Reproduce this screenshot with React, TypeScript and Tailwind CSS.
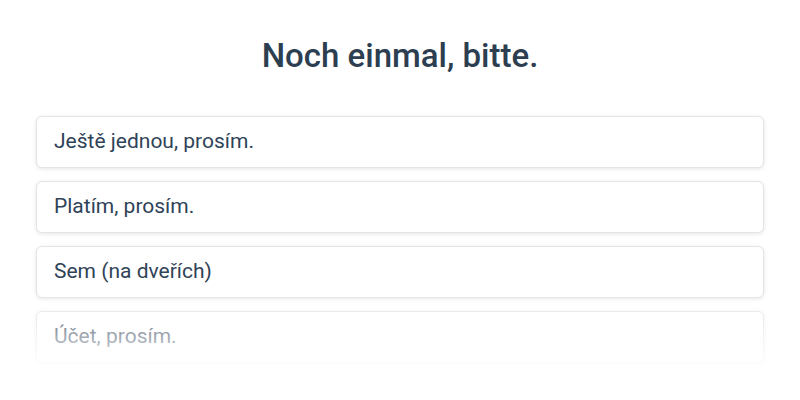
const phrases = ['Ještě jednou, prosím.', 'Platím, prosím.', 'Sem (na dveřích)', 'Účet, prosím.']

export default function App() {
  return (
    <div className="w-[800px] h-[400px] bg-white overflow-hidden font-['Roboto',sans-serif] text-[#2c3e50]">
      <h1 className="pt-[36px] text-center text-[33px] leading-[40px] font-medium">Noch einmal, bitte.</h1>
      <div className="relative mx-[36px] mt-[40px] flex flex-col gap-[13px] pb-[10px]">
        {phrases.map((p) => (
          <div
            key={p}
            className="h-[52px] flex items-center px-[17px] rounded-[6px] border border-[#e4e4e4] bg-white shadow-[0_1px_4px_rgba(0,0,0,0.10)] text-[21px] text-[#2f4358]"
          >
            {p}
          </div>
        ))}
        <div className="pointer-events-none absolute left-[-6px] right-[-6px] bottom-0 h-[80px] bg-gradient-to-b from-white/0 to-white" />
      </div>
    </div>
  )
}
